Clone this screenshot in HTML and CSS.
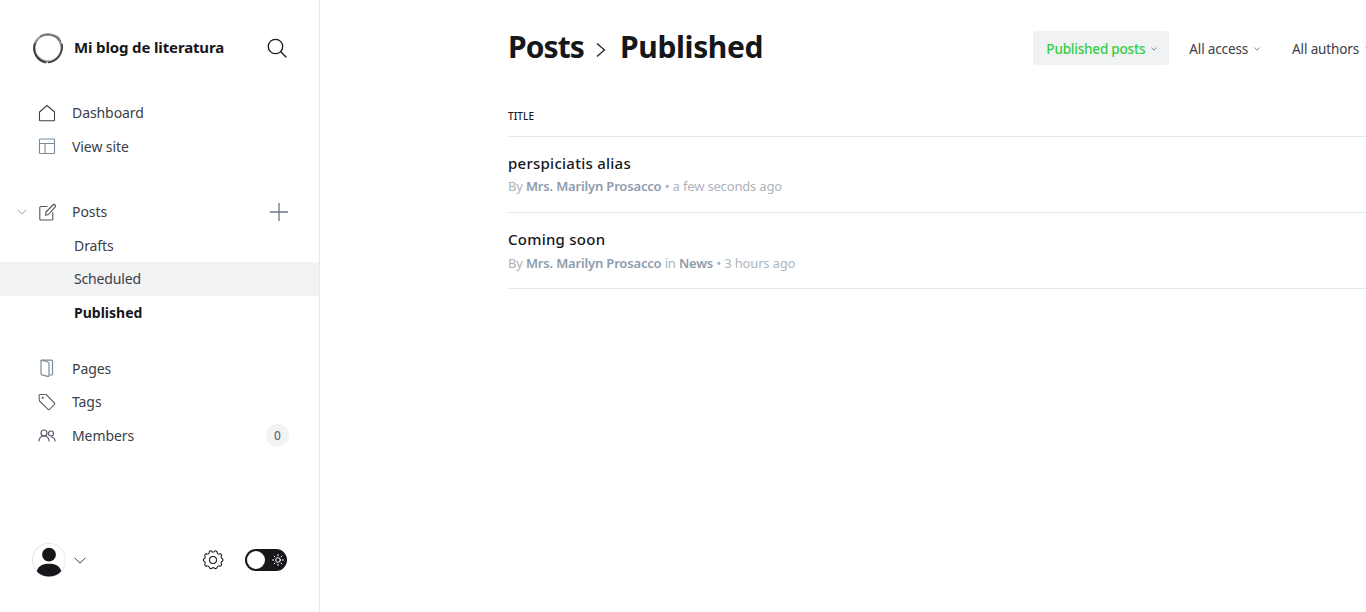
FILE: index.html
```html
<!DOCTYPE html>
<html lang="en">
<head>
<meta charset="utf-8">
<title>Posts - Published</title>
<link rel="stylesheet" href="styles.css">
</head>
<body>
<div class="app">
  <aside class="sidebar">
    <div class="top">
      <div class="brand">
        <svg class="logo" viewBox="0 0 32 32" fill="none"><circle cx="16" cy="16" r="13.600" stroke="#8c8c8c" stroke-width="2.200"/><path d="M5 8C10 1.500 22 .5 28 6.500" stroke="#a8a8a8" stroke-width="1.600"/><path d="M3 11C0 20 5 29 14 30.500" stroke="#3a3a3a" stroke-width="1.800"/><path d="M30 12c1.500 8-5 18-14 18.500" stroke="#333" stroke-width="1.400"/><path d="M8 4.500C14 1 24 2.500 29 9" stroke="#555" stroke-width="1"/></svg>
        <span class="brand-name">Mi blog de literatura</span>
        <svg class="search" viewBox="0 0 20 20" fill="none" stroke="#15171a" stroke-width="1.300" stroke-linecap="round"><circle cx="8.500" cy="8.500" r="7.200"/><path d="M13.800 13.800 19 19"/></svg>
      </div>
      <nav class="group">
        <a class="row"><svg class="ico" viewBox="0 0 18 18" fill="none" stroke="#394047" stroke-width="1.050" stroke-linejoin="round"><path d="M1.500 8 9 1.500 16.500 8v8a.8.8 0 0 1-.8.8H2.300a.8.8 0 0 1-.8-.8z"/></svg>Dashboard</a>
        <a class="row"><svg class="ico" viewBox="0 0 18 18" fill="none" stroke="#7c8b9a" stroke-width="1.100"><rect x="1.500" y="2" width="15" height="14.500" rx=".8"/><path d="M1.500 6.500h15M7 6.500v10"/></svg>View site</a>
      </nav>
      <nav class="group">
        <div class="row posts">
          <svg class="caret" viewBox="0 0 10 6" fill="none" stroke="#9aa3ab" stroke-width="1"><path d="M.5.700 5 5.200 9.500.7"/></svg>
          <svg class="ico" viewBox="0 0 18 18" fill="none" stroke="#4d5560" stroke-width="1.100" stroke-linejoin="round" stroke-linecap="round"><path d="M9 3.500H2.800a1 1 0 0 0-1 1V16a1 1 0 0 0 1 1h11a1 1 0 0 0 1-1V9.500"/><path d="M7.500 12.200 8 9 14.800 2a1.500 1.500 0 0 1 2.200 2.200L10.500 11.500z"/></svg>
          <span class="grow">Posts</span>
          <svg class="plus" viewBox="0 0 18 18" fill="none" stroke="#6b7480" stroke-width="1.300"><path d="M9 0v18M0 9h18"/></svg>
        </div>
        <a class="row sub">Drafts</a>
        <a class="row sub hover">Scheduled</a>
        <a class="row sub active">Published</a>
      </nav>
      <nav class="group tight">
        <a class="row"><svg class="ico" viewBox="0 0 18 18" fill="none" stroke="#7c8b9a" stroke-width="1.200" stroke-linejoin="round"><path d="M3 2.200a1 1 0 0 1 1-1h9.500a1 1 0 0 1 1 1V15a1 1 0 0 1-1 1H11"/><path d="M3 2.200c0-.8.800-1 1.500-.8L10 3c.7.2 1 .7 1 1.400V16.500c0 .7-.6 1.100-1.300.9L4 15.800c-.7-.2-1-.7-1-1.400z"/></svg>Pages</a>
        <a class="row"><svg class="ico" viewBox="0 0 18 18" fill="none" stroke="#5b6570" stroke-width="1.100" stroke-linejoin="round"><path d="M1 2.500a1 1 0 0 1 1-1h6L16.500 10a1 1 0 0 1 0 1.400l-5 5a1 1 0 0 1-1.400 0L1.500 8z"/><circle cx="4.800" cy="4.800" r=".6"/></svg>Tags</a>
        <a class="row"><svg class="ico" viewBox="0 0 18 18" fill="none" stroke="#4d5560" stroke-width="1.100" stroke-linecap="round"><circle cx="6" cy="7" r="3"/><path d="M1 15c0-3 2-5 5-5s5 2 5 5"/><circle cx="13" cy="7.500" r="2.500"/><path d="M13.500 11c2 .3 3.500 1.800 3.500 4"/></svg><span class="grow">Members</span><span class="count">0</span></a>
      </nav>
    </div>
    <div class="foot">
      <div class="avatar"><svg viewBox="0 0 32 32"><circle cx="16" cy="16" r="15.500" fill="#fff" stroke="#e6e9eb"/><circle cx="16" cy="11" r="6.500" fill="#15171a"/><path d="M4.500 26.500C6 21 11 19.500 16 19.500s10 1.500 11.500 7C24.500 30 20.500 31.500 16 31.500S7.500 30 4.500 26.500z" fill="#15171a"/></svg></div>
      <svg class="foot-caret" viewBox="0 0 12 7" fill="none" stroke="#394047" stroke-width="1"><path d="M.5.700 6 6.200 11.500.7"/></svg>
      <svg class="gear" viewBox="0 0 24 24" fill="none" stroke="#15171a" stroke-width="1.150" stroke-linejoin="round"><circle cx="12" cy="12" r="3.800"/><path d="M10.300 2.300a1.800 1.800 0 0 0 3.400 0 1.800 1.800 0 0 1 2.700 1l.1.600a1.800 1.800 0 0 0 2.500 1.500 1.800 1.800 0 0 1 2.200 2.400 1.800 1.800 0 0 0 1 2.800 1.800 1.800 0 0 1 0 2.800 1.800 1.800 0 0 0-1 2.800 1.800 1.800 0 0 1-2.200 2.400 1.800 1.800 0 0 0-2.500 1.500 1.800 1.800 0 0 1-3 .8 1.800 1.800 0 0 0-2.600 0 1.800 1.800 0 0 1-3-.8 1.800 1.800 0 0 0-2.500-1.500 1.800 1.800 0 0 1-2.200-2.400 1.800 1.800 0 0 0-1-2.800 1.800 1.800 0 0 1 0-2.800 1.800 1.800 0 0 0 1-2.800 1.800 1.800 0 0 1 2.200-2.400 1.800 1.800 0 0 0 2.500-1.500 1.800 1.800 0 0 1 2.800-1.600z"/></svg>
      <div class="toggle"><span class="knob"></span><svg class="sun" viewBox="0 0 12 12" fill="none" stroke="#fff" stroke-width="1" stroke-linecap="round"><circle cx="6" cy="6" r="2.300"/><path d="M6 .5v1.300M6 10.200v1.300M.5 6h1.300M10.200 6h1.300M2.100 2.100l.9.900M9 9l.9.900M2.100 9.900 3 9M9 3l.9-.9"/></svg></div>
    </div>
  </aside>
  <main class="main">
    <header class="head">
      <h1 class="crumbs"><span class="crumb-a">Posts</span><svg class="sep" viewBox="0 0 10 16" fill="none" stroke="#15171a" stroke-width="1.200"><path d="M1 1.500 8.500 8 1 14.500"/></svg><span>Published</span></h1>
      <div class="filters">
        <div class="filter on">Published posts<svg viewBox="0 0 6 4" fill="none" stroke="#7c8b9a" stroke-width="1"><path d="M.4.500 3 3.200 5.600.5"/></svg></div>
        <div class="filter">All access<svg viewBox="0 0 6 4" fill="none" stroke="#7c8b9a" stroke-width="1"><path d="M.4.500 3 3.200 5.600.5"/></svg></div>
        <div class="filter">All authors<svg viewBox="0 0 6 4" fill="none" stroke="#7c8b9a" stroke-width="1"><path d="M.4.500 3 3.200 5.600.5"/></svg></div>
      </div>
    </header>
    <div class="col-title">TITLE</div>
    <article class="post">
      <h3>perspiciatis alias</h3>
      <p>By <b>Mrs. Marilyn Prosacco</b> <i>•</i> a few seconds ago</p>
    </article>
    <article class="post">
      <h3>Coming soon</h3>
      <p class="lower">By <b>Mrs. Marilyn Prosacco</b> in <b>News</b> <i>•</i> 3 hours ago</p>
    </article>
  </main>
</div>
</body>
</html>
```
FILE: styles.css
```css
* { box-sizing: border-box; }
html, body { margin: 0; height: 100%; overflow: hidden; background: #fff; }
body { font-family: "Noto Sans", "Open Sans", sans-serif; color: #15171a; }
.app { display: flex; height: 612px; width: 1366px; overflow: hidden; }
.sidebar { flex: 0 0 320px; border-right: 1px solid #e6e9eb; display: flex; flex-direction: column; justify-content: space-between; }
.brand { display: flex; align-items: center; height: 32px; margin: 32px 32px 0 32px; }
.logo { width: 32px; height: 32px; margin-right: 10px; }
.brand-name { flex: 1; font-size: 15px; line-height: 30px; height: 32px; font-weight: 700; letter-spacing: -.14px; white-space: nowrap; }
.search { width: 20px; height: 20px; }
.group { margin-top: 32px; }
.tight { margin-top: 22.600px; }
.row { display: flex; align-items: center; height: 33.500px; padding-left: 38px; padding-right: 31px; font-size: 14px; letter-spacing: -.08px; color: #394047; white-space: nowrap; }
.ico { width: 18px; height: 18px; margin-right: 16px; flex: none; }
.posts { position: relative; }
.caret { position: absolute; left: 16.500px; top: 14px; width: 10px; height: 6px; }
.grow { flex: 1; }
.plus { width: 18px; height: 18px; }
.sub { padding-left: 74px; }
.hover { background: #f1f2f4; letter-spacing: -.15px; }
.active { font-weight: 700; color: #15171a; letter-spacing: 0; }
.count { width: 23px; height: 23px; border-radius: 50%; background: #f1f3f4; font-size: 12px; display: flex; align-items: center; justify-content: center; margin-right: -1px; color: #626d79; font-weight: 500; letter-spacing: 0; }
.foot { display: flex; align-items: center; height: 34px; margin: 0 32px 35px 32px; }
.avatar { width: 34px; height: 34px; margin-right: 8px; }
.avatar svg { display: block; width: 34px; height: 34px; }
.foot-caret { width: 12px; height: 7px; margin-right: 116px; }
.gear { width: 22px; height: 22px; margin-right: 21px; }
.toggle { width: 42px; height: 22px; border-radius: 11px; background: #15171a; display: flex; align-items: center; justify-content: space-between; padding: 0 3px 0 2px; }
.knob { width: 18px; height: 18px; border-radius: 50%; background: #fff; }
.sun { width: 12px; height: 12px; }
.main { flex: 1; min-width: 0; padding-left: 188px; }
.head { display: flex; align-items: flex-start; justify-content: space-between; height: 86px; padding-top: 30px; white-space: nowrap; }
.crumbs { margin: 0; display: flex; align-items: center; font-size: 30px; font-weight: 700; line-height: 34px; letter-spacing: -.38px; }
.crumb-a { letter-spacing: -.9px; }
.sep { width: 10px; height: 16px; margin: 5px 14px 0 12px; }
.filters { display: flex; align-items: center; flex: none; margin-top: 1px; margin-right: -24px; }
.filter { display: flex; align-items: center; height: 34px; padding: 1px 12px 0 13px; margin-right: 7px; font-size: 13.500px; letter-spacing: -.14px; color: #394047; border-radius: 3px; }
.filter svg { width: 6px; height: 4px; margin-left: 6px; }
.on { background: #f1f2f4; color: #30cf43; font-weight: 500; letter-spacing: -.2px; }
.col-title { height: 51px; padding-top: 23px; font-size: 10px; font-weight: 500; letter-spacing: .1px; line-height: 14px; border-bottom: 1px solid #e6e9eb; }
.post { height: 76px; border-bottom: 1px solid #e6e9eb; padding-top: 16px; }
.post h3 { margin: 0; font-size: 15px; line-height: 21px; font-weight: 500; letter-spacing: .25px; white-space: nowrap; }
.post p { margin: 3px 0 0; font-size: 13px; line-height: 18px; color: #abb4be; white-space: nowrap; letter-spacing: -.17px; }
.post .lower { margin-top: 4px; }
.post p b { color: #8e9cac; font-weight: 600; }
.post p i { font-style: normal; }
```
